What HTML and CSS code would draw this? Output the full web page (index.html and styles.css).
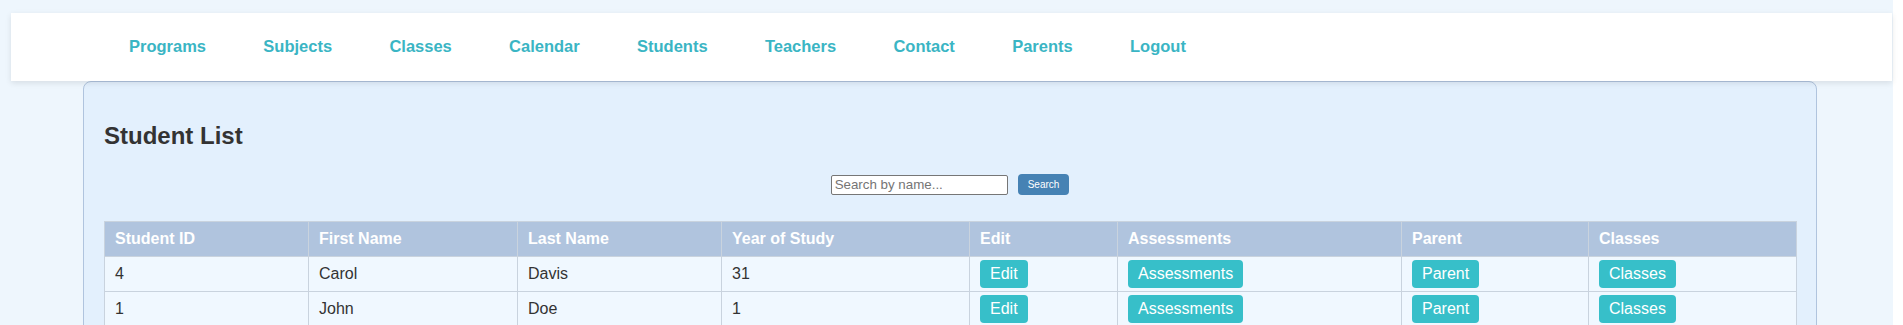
FILE: index.html
```html
<!DOCTYPE html>
<html lang="en">
<head>
  <meta charset="UTF-8">
  <meta name="viewport" content="width=device-width, initial-scale=1.0">
  <title>Student List</title>
  <link rel="stylesheet" href="styles.css">
</head>
<body>
  <nav class="navbar">
    <a href="#" class="nav-link">Programs</a>
    <a href="#" class="nav-link">Subjects</a>
    <a href="#" class="nav-link">Classes</a>
    <a href="#" class="nav-link">Calendar</a>
    <a href="#" class="nav-link">Students</a>
    <a href="#" class="nav-link">Teachers</a>
    <a href="#" class="nav-link">Contact</a>
    <a href="#" class="nav-link">Parents</a>
    <a href="#" class="nav-link">Logout</a>
  </nav>

  <div class="container">
    <h2>Student List</h2>

    <form class="search-bar" onsubmit="return false;">
      <input type="text" class="search-input" placeholder="Search by name...">
      <button type="submit" class="search-btn">Search</button>
    </form>

    <table class="student-table">
      <colgroup>
        <col class="col-id">
        <col class="col-first">
        <col class="col-last">
        <col class="col-year">
        <col class="col-edit">
        <col class="col-assess">
        <col class="col-parent">
        <col class="col-classes">
      </colgroup>
      <thead>
        <tr>
          <th>Student ID</th>
          <th>First Name</th>
          <th>Last Name</th>
          <th>Year of Study</th>
          <th>Edit</th>
          <th>Assessments</th>
          <th>Parent</th>
          <th>Classes</th>
        </tr>
      </thead>
      <tbody>
        <tr>
          <td>4</td>
          <td>Carol</td>
          <td>Davis</td>
          <td>31</td>
          <td><button class="btn">Edit</button></td>
          <td><button class="btn">Assessments</button></td>
          <td><button class="btn">Parent</button></td>
          <td><button class="btn">Classes</button></td>
        </tr>
        <tr>
          <td>1</td>
          <td>John</td>
          <td>Doe</td>
          <td>1</td>
          <td><button class="btn">Edit</button></td>
          <td><button class="btn">Assessments</button></td>
          <td><button class="btn">Parent</button></td>
          <td><button class="btn">Classes</button></td>
        </tr>
      </tbody>
    </table>
  </div>
</body>
</html>
```

FILE: styles.css
```css
body {
  font-family: 'Liberation Sans', Arial, sans-serif;
  margin: 0;
  padding: 0;
  color: #333;
  background: linear-gradient(to right, #eef6fd calc(100% - 10px), #fff calc(100% - 10px));
}

.navbar {
  background: #fff;
  margin: 13px 11px 0 11px;
  height: 68px;
  box-sizing: border-box;
  padding: 0 118px 2px 118px;
  display: flex;
  align-items: center;
  gap: 57.3px;
  box-shadow: 0 2px 6px rgba(0,0,0,0.1);
  position: relative;
  z-index: 1;
}

.nav-link {
  color: #3ab5c4;
  font-weight: bold;
  font-size: 16.5px;
  text-decoration: none;
}

.container {
  width: 1734px;
  box-sizing: border-box;
  margin: 0 0 0 83px;
  background: #e3f0fd;
  border: 1px solid #b0c4de;
  border-radius: 8px;
  padding: 20px;
}

.container h2 {
  font-size: 24px;
  margin: 20px 0;
  color: #333;
}

.search-bar {
  display: flex;
  justify-content: center;
  align-items: center;
  gap: 10px;
  padding: 4px 0;
  margin: 0 0 22px 0;
}

.search-input {
  width: 177px;
  height: 20px;
  box-sizing: border-box;
  border: 1px solid #767676;
  border-radius: 2px;
  padding: 1px 3px;
  font-family: 'Liberation Sans', Arial, sans-serif;
  font-size: 13.33px;
  background: #fff;
}

.search-input::placeholder {
  color: #757575;
}

.search-btn {
  height: 21px;
  padding: 0 10px;
  background: #4682b4;
  color: #fff;
  border: none;
  border-radius: 4px;
  font-family: 'Liberation Sans', Arial, sans-serif;
  font-size: 10px;
  cursor: pointer;
}

.student-table {
  width: 100%;
  border-collapse: collapse;
  table-layout: fixed;
  background: #f0f8ff;
}

.col-id { width: 204px; }
.col-first { width: 209px; }
.col-last { width: 204px; }
.col-year { width: 248px; }
.col-edit { width: 148px; }
.col-assess { width: 284px; }
.col-parent { width: 187px; }
.col-classes { width: 208px; }

.student-table th {
  background: #b0c4de;
  color: #fff;
  font-weight: bold;
  font-size: 16px;
  text-align: left;
  padding: 8px 10px;
  border: 1px solid #c9d3de;
}

.student-table td {
  font-size: 16px;
  padding: 3px 10px;
  border: 1px solid #c9d3de;
  color: #333;
}

.btn {
  background: #37bfc9;
  color: #fff;
  border: none;
  border-radius: 4px;
  padding: 5px 10px;
  font-family: 'Liberation Sans', Arial, sans-serif;
  font-size: 16px;
  cursor: pointer;
}
```
